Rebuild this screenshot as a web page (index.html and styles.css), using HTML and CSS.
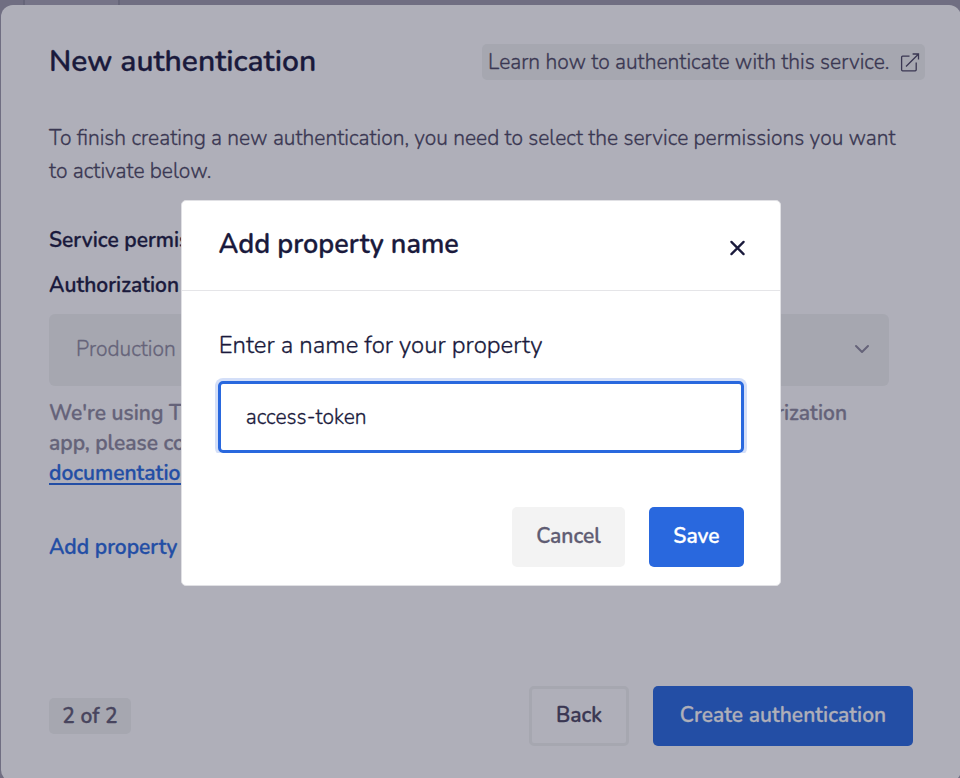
FILE: index.html
```html
<!DOCTYPE html>
<html lang="en">
<head>
<meta charset="utf-8">
<title>New authentication</title>
<link rel="stylesheet" href="styles.css">
</head>
<body>
<div class="backdrop-tab"></div>
<main class="panel">
  <header class="panel-head">
    <h1 class="title">New authentication</h1>
    <a class="learn"><span>Learn how to authenticate with this service.</span>
      <svg class="ext" width="20" height="20" viewBox="0 0 20 20" fill="none" stroke="currentColor" stroke-width="1.3"><path d="M9.5 3.2H2.6Q1.6 3.2 1.6 4.2V16.8Q1.6 17.8 2.6 17.8H15.2Q16.2 17.8 16.2 16.8V9.5M6 13.5L18.3 1.2M12.6 1H18.5V6.6"/></svg>
    </a>
  </header>
  <p class="intro">To finish creating a new authentication, you need to select the service permissions you want<br>to activate below.</p>
  <h2 class="section">Service permissions</h2>
  <h3 class="section label">Authorization</h3>
  <div class="select"><span>Production</span>
    <svg width="16" height="10" viewBox="0 0 16 10" fill="none" stroke="currentColor" stroke-width="2" stroke-linecap="round" stroke-linejoin="round"><path d="M2 2L8 8L14 2"/></svg>
  </div>
  <div class="hint">
    <div class="hint-line"><span>We're using Tray's</span><span>authorization</span></div>
    <div>app, please consult</div>
    <div><a class="doc">documentation</a></div>
  </div>
  <a class="add">Add property</a>
  <footer class="panel-foot">
    <span class="step">2 of 2</span>
    <button class="btn back">Back</button>
    <button class="btn create">Create authentication</button>
  </footer>
</main>
<div class="overlay">
  <section class="modal" role="dialog">
    <header class="modal-head">
      <h2 class="modal-title">Add property name</h2>
      <svg class="close" width="18" height="18" viewBox="0 0 18 18" fill="none" stroke="currentColor" stroke-width="2.3" stroke-linecap="round"><path d="M2.4 2.9L14.6 15.1M14.6 2.9L2.4 15.1"/></svg>
    </header>
    <div class="modal-body">
      <label class="field-label">Enter a name for your property</label>
      <div class="field">access-token</div>
      <div class="actions">
        <button class="btn cancel">Cancel</button>
        <button class="btn save">Save</button>
      </div>
    </div>
  </section>
</div>
</body>
</html>
```
FILE: styles.css
```css
*{box-sizing:border-box}
body{margin:0;width:960px;height:778px;overflow:hidden;background:#706e82;font-family:Nunito,Lato,sans-serif;font-size:21px;font-weight:300;-webkit-text-stroke:.3px;color:#1a1a3c;padding:5px 0 0 1px}
h1,h2,h3,p{margin:0}
span{white-space:nowrap}
.backdrop-tab{position:absolute;left:23px;top:0;width:97px;height:5px;background:#757387;border:solid #666579;border-width:0 2px}
.panel{width:960px;height:777px;background:#afafb9;border-radius:12px;padding:39px 36px 36px 48px;display:flex;flex-direction:column}
.panel-head{display:flex;justify-content:space-between;height:36px;align-items:center}
.title{font-size:30px;font-weight:600;line-height:36px;letter-spacing:-.04px}
.learn{display:flex;align-items:center;justify-content:space-between;width:443px;height:36px;padding:0 5px 0 6px;background:#a6a7b0;border-radius:5px;color:#3a3752}
.ext{margin-top:1px}
.intro{margin-top:42px;line-height:33px;color:#3a3752;white-space:nowrap}
.section{font-size:21px;font-weight:600;line-height:30px;margin-top:37px}
.section.label{margin-top:15px}
.select{margin-top:14px;width:840px;height:72px;border-radius:6px;background:#a6a7b0;color:#656379;display:flex;align-items:center;justify-content:space-between;padding:0 19px 2px 27px}
.hint{margin-top:12px;font-weight:600;line-height:30px;color:#656379}
.hint-line{display:flex;justify-content:space-between;width:798px}
.doc,.add{color:#234ea5}
.doc{text-decoration:underline;text-decoration-thickness:2px;text-underline-offset:3px}
.add{font-weight:600;line-height:30px;margin-top:44px}
.panel-foot{margin-top:auto;display:flex;align-items:center;padding-right:12px}
.step{width:82px;height:36px;background:#a6a7b0;border-radius:5px;font-weight:600;color:#48455e;display:flex;align-items:center;justify-content:center;margin-right:auto}
.btn{font:600 21px Nunito,Lato,sans-serif;-webkit-text-stroke:.3px;height:60px;border:0;border-radius:5px;padding:0 0 2px}
.back{width:100px;background:transparent;border:3px solid #a6a7b0;color:#3a3752;margin-right:24px}
.create{width:260px;background:#234ea5;color:#afafb9}
.overlay{position:fixed;inset:0;display:flex;align-items:flex-start;padding:200px 0 0 181px}
.modal{width:600px;height:386px;background:#fff;border:1px solid #e0e0e4;border-radius:5px}
.modal-head{height:90px;border-bottom:1px solid #e5e5e8;display:flex;justify-content:space-between;padding:27px 33px 0 36.5px}
.modal-title{font-size:27px;font-weight:600;line-height:34px}
.close{margin-top:11px}
.modal-body{padding:37px 36px 0 36px}
.field-label{display:block;font-size:24px;line-height:34px;padding-left:.7px}
.field{margin-top:19px;height:72px;border:3px solid #2968de;border-radius:5px;box-shadow:0 0 0 3px #d4dff8;clip-path:inset(-3px -3px 0);display:flex;align-items:center;padding-left:24.7px}
.actions{display:flex;justify-content:flex-end;gap:24px;margin-top:54px}
.cancel{width:113px;background:#f3f3f3;color:#5f5c72}
.save{width:95px;background:#2968de;color:#fff}
```
